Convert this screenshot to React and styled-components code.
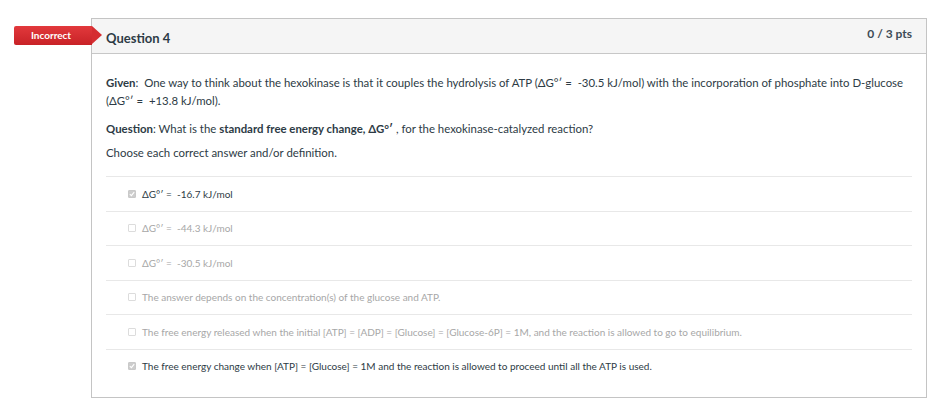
import React from 'react'
import styled, { createGlobalStyle } from 'styled-components'

const GlobalStyle = createGlobalStyle`
  body {
    margin: 0;
    background: white;
    font-family: Lato, "Open Sans", "Liberation Sans", sans-serif;
    color: #2d3b45;
  }
`;

const Page = styled.div`
  padding: 18px 0 0 91px;
`;

const Card = styled.div`
  position: relative;
  width: 836px;
  height: 380px;
  box-sizing: border-box;
  border: 1px solid #c4c4c4;
  background: white;
`;

const Badge = styled.div`
  position: absolute;
  left: -78px;
  top: 7px;
  width: 78px;
  height: 19px;
  background: linear-gradient(#e2393c, #c82227);
  color: white;
  font-size: 10px;
  font-weight: 700;
  line-height: 19px;
  text-align: center;
  padding-right: 4px;
  box-sizing: border-box;
  border-radius: 2px 0 0 2px;

  &::after {
    content: '';
    position: absolute;
    right: -10px;
    top: 0;
    width: 0;
    height: 0;
    border-left: 10px solid #d52d31;
    border-top: 9.5px solid transparent;
    border-bottom: 9.5px solid transparent;
  }
`;

const Header = styled.div`
  display: flex;
  align-items: center;
  justify-content: space-between;
  height: 34px;
  padding: 0 14px 0 14px;
  background: #f5f5f5;
  border-bottom: 1px solid #c7c7c7;
`;

const Title = styled.span`
  font-size: 13px;
  font-weight: 700;
  padding-top: 3px;
`;

const Points = styled.span`
  font-size: 12px;
  font-weight: 700;
  color: #3d4b55;
  padding-bottom: 6px;
`;

const Body = styled.div`
  padding: 20px 14px 0 14px;
`;

const Text = styled.p`
  margin: 0 0 ${p => p.gap || 0}px 0;
  font-size: 11.4px;
  line-height: 18px;
  color: #2d3b45;
`;

const Answers = styled.div`
  margin-top: 14px;
`;

const Row = styled.div`
  display: flex;
  align-items: center;
  gap: 6px;
  height: 33.5px;
  padding-left: 22px;
  border-top: 1px solid #e8e8e8;
  font-size: 10px;
  color: ${p => (p.checked ? '#2d3b45' : '#a7a7a7')};
`;

const Box = styled.span`
  display: inline-flex;
  align-items: center;
  justify-content: center;
  flex-shrink: 0;
  width: 8px;
  height: 8px;
  box-sizing: border-box;
  border-radius: 1px;
  border: 1px solid ${p => (p.checked ? '#c9c9c9' : '#dcdcdc')};
  background: ${p => (p.checked ? '#cdcdcd' : 'white')};
`;

const Check = ({ checked }) => (
  <Box checked={checked}>
    {checked && (
      <svg width="6" height="6" viewBox="0 0 6 6">
        <path d="M0.8 3.1 L2.4 4.6 L5.2 1.2" fill="none" stroke="white" strokeWidth="1.1" />
      </svg>
    )}
  </Box>
);

const answers = [
  { text: 'ΔG°′\u00a0=\u00a0\u00a0-16.7 kJ/mol', checked: true },
  { text: 'ΔG°′\u00a0=\u00a0\u00a0-44.3 kJ/mol', checked: false },
  { text: 'ΔG°′\u00a0=\u00a0\u00a0-30.5 kJ/mol', checked: false },
  { text: 'The answer depends on the concentration(s) of the glucose and ATP.', checked: false },
  {
    text: 'The free energy released when the initial [ATP] = [ADP] = [Glucose] = [Glucose-6P] = 1M, and the reaction is allowed to go to equilibrium.',
    checked: false,
  },
  {
    text: 'The free energy change when [ATP] = [Glucose] = 1M and the reaction is allowed to proceed until all the ATP is used.',
    checked: true,
  },
];

const App = () => {
  return (
    <Page>
      <GlobalStyle />
      <Card>
        <Badge>Incorrect</Badge>
        <Header>
          <Title>Question 4</Title>
          <Points>0 / 3 pts</Points>
        </Header>
        <Body>
          <Text gap={10}>
            <b>Given</b>:&nbsp; One way to think about the hexokinase is that it couples the hydrolysis of ATP (ΔG°′ =&nbsp; -30.5 kJ/mol) with the incorporation of phosphate into D‑glucose (ΔG°′ =&nbsp; +13.8 kJ/mol).
          </Text>
          <Text gap={6}>
            <b>Question</b>: What is the <b>standard free energy change, ΔG°′</b> , for the hexokinase-catalyzed reaction?
          </Text>
          <Text>Choose each correct answer and/or definition.</Text>
          <Answers>
            {answers.map((a, i) => (
              <Row key={i} checked={a.checked}>
                <Check checked={a.checked} />
                <span>{a.text}</span>
              </Row>
            ))}
          </Answers>
        </Body>
      </Card>
    </Page>
  );
};

export default App;
